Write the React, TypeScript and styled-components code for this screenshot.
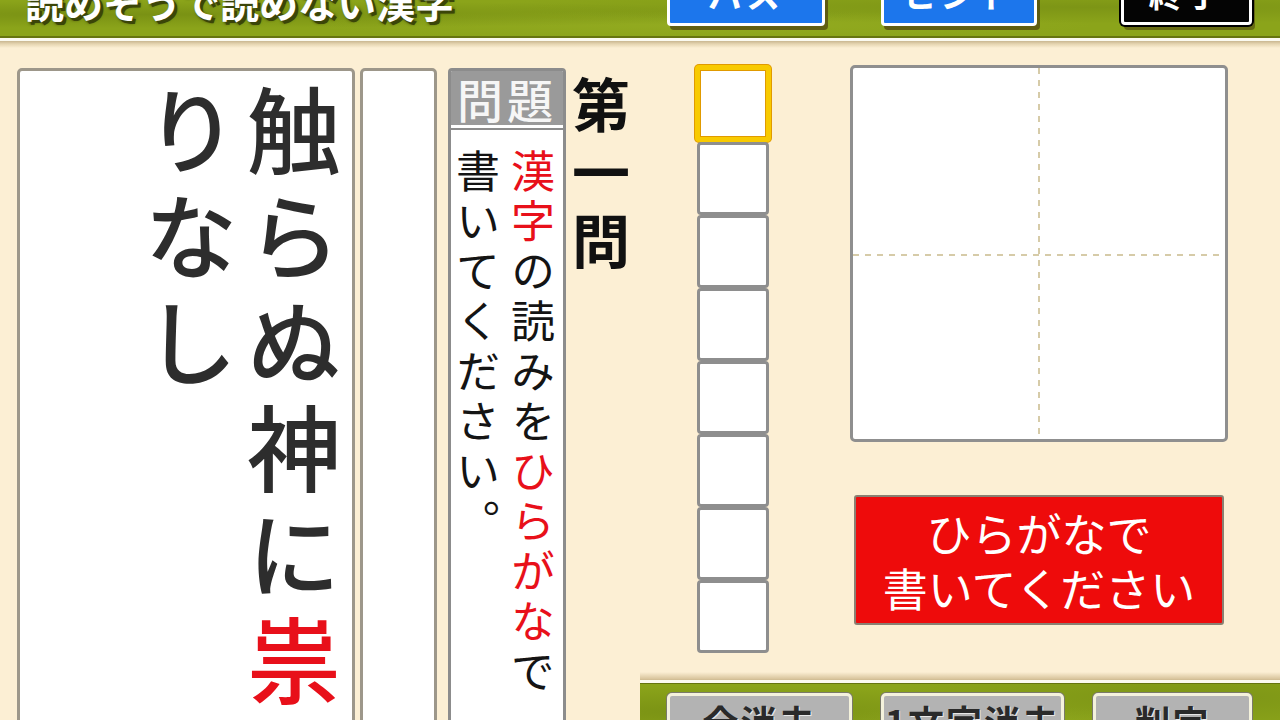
import * as React from 'react'
import styled, { createGlobalStyle, css } from 'styled-components'

const GlobalStyle = createGlobalStyle`
    html, body {
        margin: 0;
        padding: 0;
        background: #fcefd4;
    }
    body {
        font-family: "Noto Sans CJK JP", "Noto Sans", sans-serif;
    }
`

const grass = css`
    background-color: #8ba41a;
    background-image: radial-gradient(ellipse at 12% 40%, rgba(70, 90, 0, 0.25), transparent 45%),
        radial-gradient(ellipse at 55% 70%, rgba(180, 200, 60, 0.18), transparent 40%),
        radial-gradient(ellipse at 85% 20%, rgba(60, 80, 0, 0.18), transparent 40%);
`

const App = (): JSX.Element => {
    const slots = [true, false, false, false, false, false, false, false]
    return (
        <>
            <GlobalStyle />
            <Screen>
                <Header>
                    <Title>読めそうで読めない漢字</Title>
                    <TopButton $variant="blue" $width={158} $gap={0}>
                        パス
                    </TopButton>
                    <TopButton $variant="blue" $width={156} $gap={56}>
                        ヒント
                    </TopButton>
                    <TopButton $variant="black" $width={131} $gap={84}>
                        終了
                    </TopButton>
                </Header>
                <HeaderRule />
                <Content>
                    <LeftPane>
                        <MainCard>
                            <Verse>
                                触らぬ神に<Red>祟</Red>
                                <br />
                                りなし
                            </Verse>
                        </MainCard>
                        <AnswerCard />
                        <ProblemPanel>
                            <PanelHead>問題</PanelHead>
                            <PanelBody>
                                <Instructions>
                                    <Red>漢字</Red>の読みを<Red>ひらがな</Red>で
                                    <br />
                                    書いてください。
                                </Instructions>
                            </PanelBody>
                        </ProblemPanel>
                        <Ordinal>第一問</Ordinal>
                    </LeftPane>
                    <RightPane>
                        <Workspace>
                            <Slots>
                                {slots.map((active, i) => (
                                    <Slot key={i} $active={active} />
                                ))}
                            </Slots>
                            <DrawColumn>
                                <Canvas>
                                    <svg width="100%" height="100%" viewBox="0 0 372 371" preserveAspectRatio="none">
                                        <line x1="186" y1="0" x2="186" y2="371" stroke="#d6cba8" strokeWidth="2" strokeDasharray="6 6" />
                                        <line x1="0" y1="187" x2="372" y2="187" stroke="#d6cba8" strokeWidth="2" strokeDasharray="6 6" />
                                    </svg>
                                </Canvas>
                                <HintButton>
                                    <HintLine>ひらがなで</HintLine>
                                    <HintLine>書いてください</HintLine>
                                </HintButton>
                            </DrawColumn>
                        </Workspace>
                        <BottomRule />
                        <Tray>
                            <TrayButton $width={185} $gap={0}>全消去</TrayButton>
                            <TrayButton $width={183} $gap={29}>1文字消去</TrayButton>
                            <TrayButton $width={159} $gap={29}>判定</TrayButton>
                        </Tray>
                    </RightPane>
                </Content>
            </Screen>
        </>
    )
}

const Screen = styled.div`
    width: 1280px;
    height: 720px;
    overflow: hidden;
    display: flex;
    flex-direction: column;
    background: #fcefd4;
`
const Header = styled.header`
    flex: none;
    height: 36px;
    display: flex;
    align-items: flex-end;
    padding: 0 28px 0 25px;
    border-bottom: 2px solid #66750f;
    overflow: hidden;
    ${grass}
`
const Title = styled.h1`
    flex: 1;
    margin: 0 0 15px;
    font-size: 39px;
    line-height: 1;
    font-weight: 700;
    color: #fff;
    white-space: nowrap;
    text-shadow: 3px 3px 0 #3b4508, 2px 2px 3px #2a3005;
`
const TopButton = styled.div<{ $variant: 'blue' | 'black'; $width: number; $gap: number }>`
    flex: none;
    box-sizing: border-box;
    width: ${(p) => p.$width}px;
    height: 48px;
    margin: 0 0 ${(p) => (p.$variant === 'black' ? 11 : 10)}px ${(p) => p.$gap}px;
    display: flex;
    align-items: flex-end;
    justify-content: center;
    padding-bottom: 12px;
    border: 3px solid #fff;
    border-radius: 4px;
    background: ${(p) => (p.$variant === 'blue' ? '#1c76ec' : '#040404')};
    box-shadow: ${(p) =>
        p.$variant === 'blue'
            ? '3px 4px 0 rgba(80, 70, 15, 0.75)'
            : '0 0 0 2px #000, 3px 5px 0 rgba(80, 70, 15, 0.6)'};
    color: #fff;
    font-size: 34px;
    font-weight: 700;
    line-height: 1;
    letter-spacing: 4px;
`
const HeaderRule = styled.div`
    flex: none;
    height: 10px;
    background: linear-gradient(#fbfaf0 0, #fbfaf0 3px, #c9b791 3px, #e6d5b1 6px, #fcefd4 10px);
`
const Content = styled.main`
    flex: 1;
    min-height: 0;
    display: flex;
`
const LeftPane = styled.section`
    flex: none;
    width: 640px;
    box-sizing: border-box;
    display: flex;
    align-items: flex-start;
    padding: 20px 0 0 17px;
`
const Card = styled.div`
    flex: none;
    box-sizing: border-box;
    height: 700px;
    background: #fff;
    border: 3px solid #9d978a;
    border-radius: 5px;
`
const MainCard = styled(Card)`
    width: 338px;
    display: flex;
    justify-content: flex-end;
    padding: 13px 7px 0 0;
`
const AnswerCard = styled(Card)`
    width: 77px;
    margin-left: 5px;
`
const Verse = styled.div`
    writing-mode: vertical-rl;
    height: 100%;
    font-size: 94px;
    line-height: 103px;
    letter-spacing: 12px;
    font-weight: 500;
    color: #2d2d2d;
`
const Red = styled.span`
    color: #e8101a;
`
const ProblemPanel = styled.div`
    flex: none;
    box-sizing: border-box;
    width: 118px;
    height: 700px;
    margin-left: 11px;
    display: flex;
    flex-direction: column;
    background: #fff;
    border: 3px solid #8c8c8c;
    border-radius: 4px;
    overflow: hidden;
`
const PanelHead = styled.div`
    flex: none;
    height: 54px;
    display: flex;
    align-items: center;
    justify-content: center;
    background: #9a9a9a;
    border-bottom: 3px solid #fff;
    color: #f6f6f6;
    font-size: 46px;
    font-weight: 500;
    letter-spacing: 4px;
    line-height: 1;
`
const PanelBody = styled.div`
    flex: 1;
    display: flex;
    justify-content: flex-end;
    border-top: 2px solid #8c8c8c;
    padding: 19px 3px 0 0;
`
const Instructions = styled.div`
    writing-mode: vertical-rl;
    height: 100%;
    font-size: 44px;
    line-height: 55px;
    letter-spacing: 6px;
    color: #141414;
`
const Ordinal = styled.div`
    flex: none;
    writing-mode: vertical-rl;
    margin: 8px 0 0 6px;
    font-size: 58px;
    line-height: 1;
    letter-spacing: 10px;
    font-weight: 700;
    color: #111;
`
const RightPane = styled.section`
    flex: 1;
    display: flex;
    flex-direction: column;
`
const Workspace = styled.div`
    flex: none;
    height: 624px;
    box-sizing: border-box;
    display: flex;
    align-items: flex-start;
    padding: 17px 0 0 57px;
`
const Slots = styled.div`
    flex: none;
    width: 72px;
    display: flex;
    flex-direction: column;
`
const Slot = styled.div<{ $active: boolean }>`
    box-sizing: border-box;
    height: ${(p) => (p.$active ? 77 : 73)}px;
    background: #fff;
    border: 3px solid #8e8e8e;
    border-radius: 4px;
    ${(p) =>
        p.$active &&
        css`
            margin: 0 -2px 0 -2px;
            border: 5px solid #f8ca00;
            box-shadow: inset 0 0 0 1px #e09a00, 0 0 0 1px #e09a00;
        `}
`
const DrawColumn = styled.div`
    flex: none;
    width: 378px;
    margin-left: 81px;
    display: flex;
    flex-direction: column;
    align-items: center;
`
const Canvas = styled.div`
    box-sizing: border-box;
    width: 378px;
    height: 377px;
    background: #fff;
    border: 3px solid #8f8f8f;
    border-radius: 5px;
    svg {
        display: block;
    }
`
const HintButton = styled.div`
    box-sizing: border-box;
    width: 370px;
    height: 130px;
    margin-top: 53px;
    display: flex;
    flex-direction: column;
    justify-content: center;
    align-items: center;
    background: #ee0b0b;
    border: 2px solid #8a8072;
    border-radius: 3px;
    color: #fff;
`
const HintLine = styled.span`
    display: block;
    height: 55px;
    font-size: 45px;
    line-height: 55px;
    white-space: nowrap;
`
const BottomRule = styled.div`
    flex: none;
    height: 12px;
    background: linear-gradient(#fcefd4 0, #d8c49c 7px, #cdb990 8px, #fbfaf0 8px, #fbfaf0 11px, #66750f 11px);
`
const Tray = styled.div`
    flex: 1;
    display: flex;
    align-items: flex-start;
    padding: 9px 0 0 27px;
    ${grass}
`
const TrayButton = styled.div<{ $width: number; $gap: number }>`
    flex: none;
    box-sizing: border-box;
    width: ${(p) => p.$width}px;
    height: 60px;
    margin-left: ${(p) => p.$gap}px;
    padding-top: 7px;
    text-align: center;
    background: #b3b3b3;
    border: 3px solid #f4f2dc;
    border-radius: 5px;
    box-shadow: 0 0 0 1px #7a7a6a;
    color: #2a2a2a;
    font-size: 36px;
    font-weight: 700;
    line-height: 1;
    letter-spacing: 2px;
    text-shadow: 1px 1px 0 #e8e8e8;
`

export default App
